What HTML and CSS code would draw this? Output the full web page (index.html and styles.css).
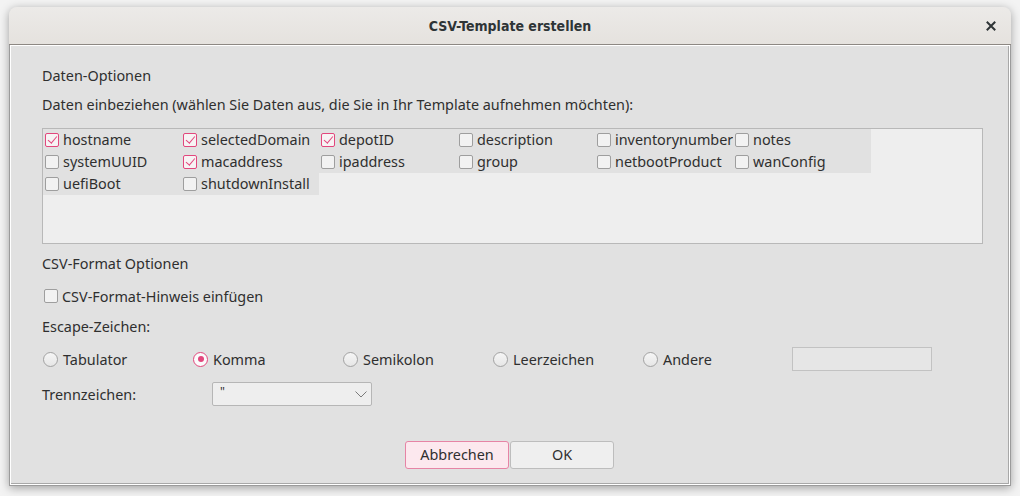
FILE: index.html
```html
<!DOCTYPE html>
<html lang="de">
<head>
<meta charset="utf-8">
<title>CSV-Template erstellen</title>
<link rel="stylesheet" href="styles.css">
</head>
<body>
<div class="window">
  <div class="titlebar">
    <span class="title">CSV-Template erstellen</span>
    <span class="close"><svg width="10" height="10" viewBox="0 0 10 10"><path d="M1.5 1.5 L8.5 8.5 M8.5 1.5 L1.5 8.5" stroke="#2e3436" stroke-width="2" stroke-linecap="square"/></svg></span>
  </div>
  <div class="content">
    <div class="inner">
      <div class="label first">Daten-Optionen</div>
      <div class="label l2">Daten einbeziehen (wählen Sie Daten aus, die Sie in Ihr Template aufnehmen möchten):</div>
      <div class="listbox">
        <div class="grid">
          <div class="cell"><span class="cb on"></span>hostname</div>
          <div class="cell"><span class="cb on"></span>selectedDomain</div>
          <div class="cell"><span class="cb on"></span>depotID</div>
          <div class="cell"><span class="cb"></span>description</div>
          <div class="cell"><span class="cb"></span>inventorynumber</div>
          <div class="cell"><span class="cb"></span>notes</div>
          <div class="cell"><span class="cb"></span>systemUUID</div>
          <div class="cell"><span class="cb on"></span>macaddress</div>
          <div class="cell"><span class="cb"></span>ipaddress</div>
          <div class="cell"><span class="cb"></span>group</div>
          <div class="cell"><span class="cb"></span>netbootProduct</div>
          <div class="cell"><span class="cb"></span>wanConfig</div>
          <div class="cell"><span class="cb"></span>uefiBoot</div>
          <div class="cell"><span class="cb"></span>shutdownInstall</div>
        </div>
      </div>
      <div class="label l3">CSV-Format Optionen</div>
      <div class="checkrow"><span class="cb"></span>CSV-Format-Hinweis einfügen</div>
      <div class="label l4">Escape-Zeichen:</div>
      <div class="radiorow">
        <div class="ritem"><span class="rb"></span>Tabulator</div>
        <div class="ritem"><span class="rb on"></span>Komma</div>
        <div class="ritem"><span class="rb"></span>Semikolon</div>
        <div class="ritem"><span class="rb"></span>Leerzeichen</div>
        <div class="ritem"><span class="rb"></span>Andere</div>
        <div class="field"></div>
      </div>
      <div class="comborow">
        <span class="clabel">Trennzeichen:</span>
        <div class="combo"><span class="cval">"</span><svg class="chev" width="12" height="7" viewBox="0 0 12 7"><path d="M0.5 0.5 L6 6 L11.5 0.5" fill="none" stroke="#7a7a7a" stroke-width="1"/></svg></div>
      </div>
      <div class="buttons">
        <button class="btn cancel">Abbrechen</button>
        <button class="btn ok">OK</button>
      </div>
    </div>
  </div>
</div>
</body>
</html>
```
FILE: styles.css
```css
html, body {
  margin: 0;
  padding: 0;
}
body {
  width: 1020px;
  height: 496px;
  background: #f3f3f3;
  overflow: hidden;
  font-family: "Noto Sans", "Open Sans", sans-serif;
  font-size: 14.4px;
  color: #2f2f2f;
}
.window {
  margin: 7px 0 0 9px;
  width: 1002px;
  border-radius: 8px 8px 0 0;
  box-shadow: 0 2px 10px rgba(0,0,0,0.35);
  background: #e1e1e1;
}
.titlebar {
  height: 37px;
  border-bottom: 1px solid #8d8883;
  border-radius: 8px 8px 0 0;
  background: linear-gradient(#eceae8, #e5e2de);
  display: flex;
  align-items: center;
  justify-content: center;
  position: relative;
}
.title {
  font-family: "DejaVu Sans Condensed", "DejaVu Sans", sans-serif;
  font-weight: 600;
  font-size: 14px;
  color: #2e3436;
  margin-top: 1px;
}
.close {
  position: absolute;
  right: 15px;
  top: 14px;
  width: 10px;
  height: 10px;
  display: flex;
}
.content {
  border: 1px solid #9b9b9b;
  border-top: none;
  height: 441px;
  box-sizing: border-box;
}
.inner {
  height: 100%;
  box-sizing: border-box;
  border: 1px solid #ffffff;
  box-shadow: inset 0 -1px 0 #a8a8a8, inset -1px 0 0 #a8a8a8;
  padding: 20px 0 0 31px;
  background: #e1e1e1;
}
.label {
  line-height: 20px;
  height: 20px;
}
.l2 { margin-top: 9px; }
.listbox {
  margin-top: 13px;
  width: 941px;
  height: 116px;
  box-sizing: border-box;
  border: 1px solid #b8b8b8;
  background: #eeeeee;
}
.grid {
  display: grid;
  grid-template-columns: repeat(6, 138px);
  grid-auto-rows: 22px;
}
.cell {
  background: #e1e1e1;
  display: flex;
  align-items: center;
  white-space: nowrap;
  padding-left: 2px;
  line-height: 22px;
}
.cb {
  width: 14px;
  height: 14px;
  box-sizing: border-box;
  border: 1px solid #9e9e9e;
  border-radius: 2px;
  background: #f2f2f2;
  margin-right: 4px;
  flex: none;
  position: relative;
}
.cb.on {
  border-color: #e2477d;
  background: #f7f3f4;
}
.cb.on::after {
  content: "";
  position: absolute;
  left: 4px;
  top: 0px;
  width: 3.5px;
  height: 8px;
  border-right: 1.6px solid #e2477d;
  border-bottom: 1.6px solid #e2477d;
  transform: rotate(40deg);
}
.l3 { margin-top: 10px; }
.checkrow {
  margin-top: 12px;
  height: 20px;
  display: flex;
  align-items: center;
  padding-left: 2px;
}
.l4 { margin-top: 11px; }
.radiorow {
  margin-top: 10px;
  height: 24px;
  display: flex;
  align-items: center;
}
.ritem {
  width: 150px;
  display: flex;
  align-items: center;
  padding-left: 1px;
  box-sizing: border-box;
}
.rb {
  width: 15px;
  height: 15px;
  box-sizing: border-box;
  border: 1px solid #a2a2a2;
  border-radius: 50%;
  background: linear-gradient(#f6f6f6, #e6e6e6);
  margin-right: 5px;
  flex: none;
  position: relative;
}
.rb.on {
  border-color: #e2477d;
  background: #fbfbfb;
}
.rb.on::after {
  content: "";
  position: absolute;
  left: 3.5px;
  top: 3.5px;
  width: 6px;
  height: 6px;
  border-radius: 50%;
  background: #e2477d;
}
.field {
  width: 140px;
  height: 24px;
  box-sizing: border-box;
  border: 1px solid #c2c2c2;
  background: #e6e6e6;
}
.comborow {
  margin-top: 11px;
  height: 24px;
  display: flex;
  align-items: center;
}
.clabel {
  width: 170px;
}
.combo {
  width: 160px;
  height: 24px;
  box-sizing: border-box;
  border: 1px solid #b6b6b6;
  border-radius: 2px;
  background: #eeeeee;
  display: flex;
  align-items: center;
  justify-content: space-between;
  padding: 0 4px 0 7px;
}
.cval {
  font-size: 12px;
  position: relative;
  top: -3px;
}
.buttons {
  margin-top: 35px;
  margin-left: 363px;
  display: flex;
  gap: 1px;
}
.btn {
  width: 104px;
  height: 28px;
  box-sizing: border-box;
  border-radius: 3px;
  font-family: "Noto Sans", "Open Sans", sans-serif;
  font-size: 14.4px;
  color: #2f2f2f;
  padding: 0;
  line-height: 24px;
}
.cancel {
  background: #fce8ee;
  border: 1px solid #e684a5;
}
.ok {
  background: #efefef;
  border: 1px solid #bdbdbd;
}
```
